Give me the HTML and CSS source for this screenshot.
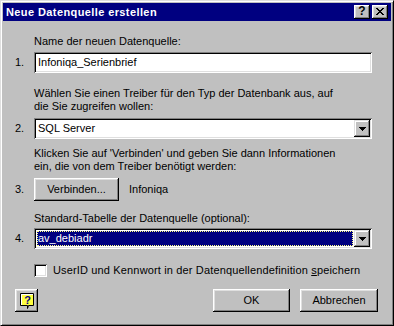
FILE: index.html
```html
<!DOCTYPE html>
<html lang="de">
<head>
<meta charset="utf-8">
<title>Neue Datenquelle erstellen</title>
<link rel="stylesheet" href="styles.css">
</head>
<body>
<div class="win">
  <div class="titlebar">
    <span class="title">Neue Datenquelle erstellen</span>
    <span class="tbtn q">?</span>
    <span class="tbtn x"><svg width="8" height="7" viewBox="0 0 8 7"><path d="M0 0h2v1h-2zM1 1h2v1h-2zM2 2h4v1h-4zM3 3h2v1h-2zM2 4h4v1h-4zM1 5h2v1h-2zM0 6h2v1h-2zM6 0h2v1h-2zM5 1h2v1h-2zM5 5h2v1h-2zM6 6h2v1h-2z" fill="#000"/></svg></span>
  </div>
  <div class="content">
    <div class="label l1">Name der neuen Datenquelle:</div>
    <div class="row r1">
      <span class="num">1.</span>
      <div class="field">Infoniqa_Serienbrief</div>
    </div>
    <div class="label l2">Wählen Sie einen Treiber für den Typ der Datenbank aus, auf<br>die Sie zugreifen wollen:</div>
    <div class="row r2">
      <span class="num">2.</span>
      <div class="field select"><span class="val">SQL Server</span><span class="ddbtn"><svg width="7" height="4" viewBox="0 0 7 4"><path d="M0 0h7v1h-7zM1 1h5v1h-5zM2 2h3v1h-3zM3 3h1v1h-1z" fill="#000"/></svg></span></div>
    </div>
    <div class="label l3">Klicken Sie auf 'Verbinden' und geben Sie dann Informationen<br>ein, die von dem Treiber benötigt werden:</div>
    <div class="row r3">
      <span class="num">3.</span>
      <span class="btn connect">Verbinden...</span>
      <span class="dsn">Infoniqa</span>
    </div>
    <div class="label l4">Standard-Tabelle der Datenquelle (optional):</div>
    <div class="row r4">
      <span class="num">4.</span>
      <div class="field select"><span class="hl">av_debiadr</span><span class="ddbtn"><svg width="7" height="4" viewBox="0 0 7 4"><path d="M0 0h7v1h-7zM1 1h5v1h-5zM2 2h3v1h-3zM3 3h1v1h-1z" fill="#000"/></svg></span></div>
    </div>
    <div class="row chkrow">
      <span class="chk"></span>
      <span class="chklbl">UserID und Kennwort in der Datenquellendefinition <u>s</u>peichern</span>
    </div>
    <div class="bottom">
      <span class="btn help"><svg width="15" height="16" viewBox="0 0 15 16"><path d="M0.5 0.5h13v12h-5l-1 3v-3h-7z" fill="#ffff40" stroke="#000"/><path d="M1 1h12v1h-12zM1 1h1v11h-1z" fill="#fff"/><text x="7.5" y="11" text-anchor="middle" class="helpq">?</text></svg></span>
      <span class="btn ok">OK</span>
      <span class="btn cancel">Abbrechen</span>
    </div>
  </div>
</div>
</body>
</html>
```

FILE: styles.css
```css
html, body {
  margin: 0;
  padding: 0;
  background: #c0c0c0;
}

.win {
  width: 394px;
  height: 326px;
  box-sizing: border-box;
  background: #c0c0c0;
  border: 1px solid;
  border-color: #dfdfdf #000 #000 #dfdfdf;
  box-shadow: inset 1px 1px #fff, inset -1px -1px #808080;
  padding: 2px;
  font-family: "Liberation Sans", Arial, sans-serif;
  font-size: 11px;
  line-height: 13px;
  color: #000;
}

.titlebar {
  height: 18px;
  background: #000080;
  color: #fff;
  display: flex;
  align-items: center;
  padding-left: 3px;
  padding-right: 3px;
}

.title {
  flex: 1;
  font-weight: bold;
  font-size: 11px;
  letter-spacing: 0.4px;
}

.tbtn {
  width: 16px;
  height: 14px;
  box-sizing: border-box;
  background: #c0c0c0;
  color: #000;
  box-shadow: inset -1px -1px #000, inset 1px 1px #fff, inset -2px -2px #808080, inset 2px 2px #dfdfdf;
  display: flex;
  align-items: center;
  justify-content: center;
}

.tbtn.q {
  font-weight: bold;
  font-size: 12px;
  margin-right: 2px;
  padding-bottom: 1px;
}

.tbtn.x svg {
  display: block;
  margin-bottom: 1px;
}

.content {
  padding-left: 12px;
}

.label {
  margin-left: 19px;
}

.l1 { margin-top: 14px; }
.l2 { margin-top: 14px; }
.l3 { margin-top: 8px; }
.l4 { margin-top: 11px; }

.row {
  display: flex;
  align-items: center;
}

.r1 { margin-top: 4px; }
.r2 { margin-top: 5px; }
.r3 { margin-top: 5px; }
.r4 { margin-top: 3px; }

.num {
  width: 19px;
  flex: none;
}

.field {
  width: 338px;
  height: 21px;
  box-sizing: border-box;
  background: #fff;
  box-shadow: inset 1px 1px #808080, inset -1px -1px #fff, inset 2px 2px #000, inset -2px -2px #dfdfdf;
  padding: 0 4px;
  display: flex;
  align-items: center;
}

.field.select {
  padding: 2px;
  align-items: stretch;
}

.val {
  flex: 1;
  padding-left: 2px;
  display: flex;
  align-items: center;
}

.hl {
  flex: 1;
  margin: 1px;
  background: #000080;
  color: #fff;
  outline: 1px dotted #ffff80;
  outline-offset: -1px;
  padding-left: 1px;
  display: flex;
  align-items: center;
}

.ddbtn {
  width: 16px;
  height: 17px;
  box-sizing: border-box;
  background: #c0c0c0;
  box-shadow: inset -1px -1px #000, inset 1px 1px #dfdfdf, inset -2px -2px #808080, inset 2px 2px #fff;
  display: flex;
  align-items: center;
  justify-content: center;
}

.ddbtn svg {
  display: block;
}

.btn {
  box-sizing: border-box;
  height: 23px;
  background: #c0c0c0;
  box-shadow: inset -1px -1px #000, inset 1px 1px #fff, inset -2px -2px #808080, inset 2px 2px #dfdfdf;
  display: flex;
  align-items: center;
  justify-content: center;
}

.connect {
  width: 85px;
}

.dsn {
  margin-left: 10px;
}

.chkrow {
  margin-top: 15px;
  padding-left: 19px;
  letter-spacing: 0.15px;
}

.chk {
  width: 13px;
  height: 13px;
  box-sizing: border-box;
  background: #fff;
  box-shadow: inset 1px 1px #808080, inset -1px -1px #fff, inset 2px 2px #000, inset -2px -2px #dfdfdf;
}

.chklbl {
  margin-left: 6px;
}

.bottom {
  display: flex;
  margin-top: 12px;
}

.help {
  width: 23px;
}

.help svg {
  display: block;
  margin-left: 1px;
  margin-top: 1px;
}

.helpq {
  font-family: "Liberation Sans", Arial, sans-serif;
  font-weight: bold;
  font-size: 11px;
  fill: #000080;
}

.ok {
  width: 77px;
  margin-left: 175px;
}

.cancel {
  width: 78px;
  margin-left: 10px;
}
```
